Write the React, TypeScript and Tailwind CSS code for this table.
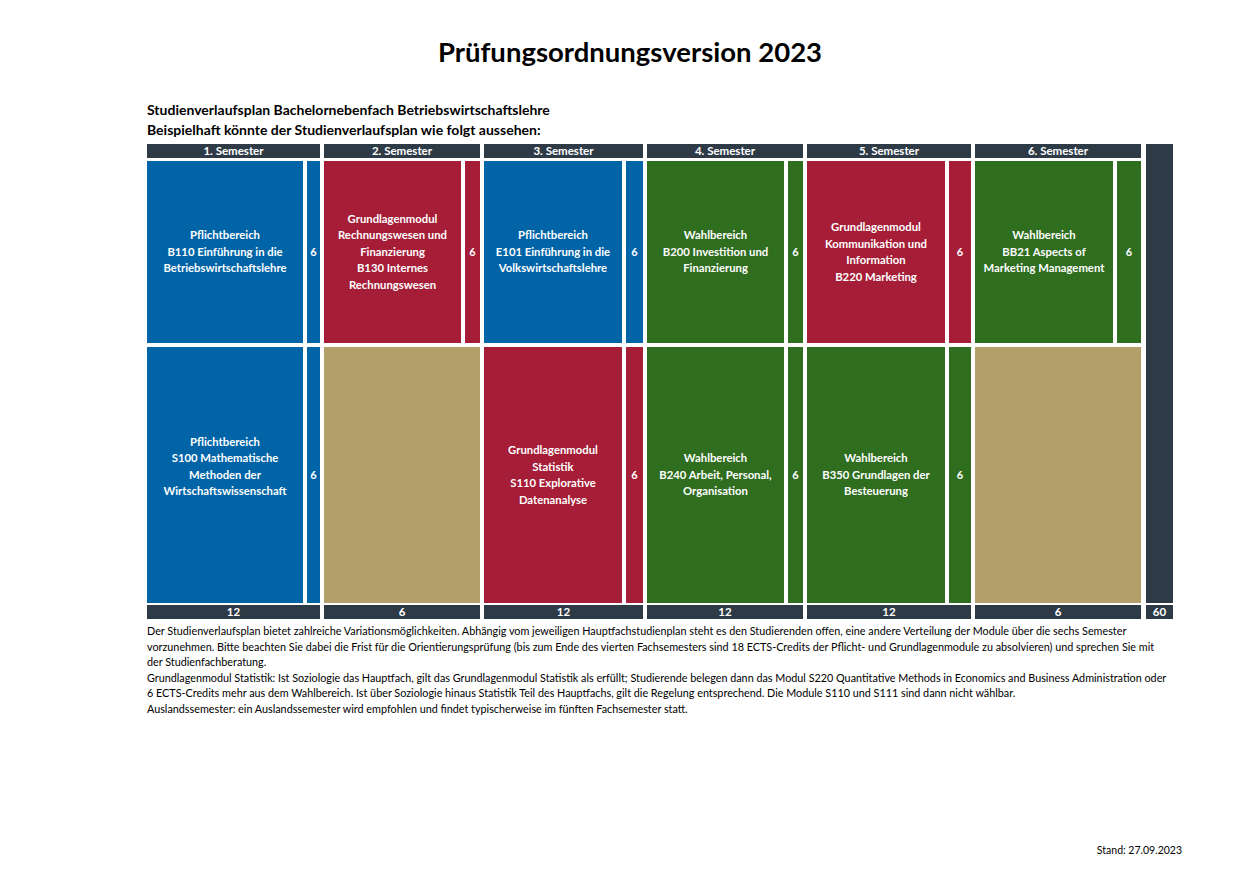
import React from 'react';

type Cell = { lines: string[]; ects?: string; color: string } | null;

const BLUE = 'bg-[#0064a7]';
const RED = 'bg-[#a51d37]';
const GREEN = 'bg-[#2f6d1f]';

const semesters: {
  label: string;
  nameW: string;
  ectsW: string;
  top: Cell;
  bottom: Cell;
  total: string;
}[] = [
  {
    label: '1. Semester',
    nameW: 'w-[156px]',
    ectsW: 'w-[13px]',
    top: { lines: ['Pflichtbereich', 'B110 Einführung in die', 'Betriebswirtschaftslehre'], ects: '6', color: BLUE },
    bottom: { lines: ['Pflichtbereich', 'S100 Mathematische', 'Methoden der', 'Wirtschaftswissenschaft', '\u00a0'], ects: '6', color: BLUE },
    total: '12',
  },
  {
    label: '2. Semester',
    nameW: 'w-[137px]',
    ectsW: 'w-[15px]',
    top: {
      lines: ['Grundlagenmodul', 'Rechnungswesen und', 'Finanzierung', 'B130 Internes', 'Rechnungswesen'],
      ects: '6',
      color: RED,
    },
    bottom: null,
    total: '6',
  },
  {
    label: '3. Semester',
    nameW: 'w-[138px]',
    ectsW: 'w-[17px]',
    top: { lines: ['Pflichtbereich', 'E101 Einführung in die', 'Volkswirtschaftslehre'], ects: '6', color: BLUE },
    bottom: { lines: ['Grundlagenmodul', 'Statistik', 'S110 Explorative', 'Datenanalyse'], ects: '6', color: RED },
    total: '12',
  },
  {
    label: '4. Semester',
    nameW: 'w-[137px]',
    ectsW: 'w-[15px]',
    top: { lines: ['Wahlbereich', 'B200 Investition und', 'Finanzierung'], ects: '6', color: GREEN },
    bottom: { lines: ['Wahlbereich', 'B240 Arbeit, Personal,', 'Organisation'], ects: '6', color: GREEN },
    total: '12',
  },
  {
    label: '5. Semester',
    nameW: 'w-[138px]',
    ectsW: 'w-[22px]',
    top: {
      lines: ['Grundlagenmodul', 'Kommunikation und', 'Information', 'B220 Marketing'],
      ects: '6',
      color: RED,
    },
    bottom: { lines: ['Wahlbereich', 'B350 Grundlagen der', 'Besteuerung'], ects: '6', color: GREEN },
    total: '12',
  },
  {
    label: '6. Semester',
    nameW: 'w-[138px]',
    ectsW: 'w-[24px]',
    top: { lines: ['Wahlbereich', 'BB21 Aspects of', 'Marketing Management'], ects: '6', color: GREEN },
    bottom: null,
    total: '6',
  },
];

const notes = [
  'Der Studienverlaufsplan bietet zahlreiche Variationsmöglichkeiten. Abhängig vom jeweiligen Hauptfachstudienplan steht es den Studierenden offen, eine andere Verteilung der Module über die sechs Semester',
  'vorzunehmen. Bitte beachten Sie dabei die Frist für die Orientierungsprüfung (bis zum Ende des vierten Fachsemesters sind 18 ECTS-Credits der Pflicht- und Grundlagenmodule zu absolvieren) und sprechen Sie mit',
  'der Studienfachberatung.',
  'Grundlagenmodul Statistik: Ist Soziologie das Hauptfach, gilt das Grundlagenmodul Statistik als erfüllt; Studierende belegen dann das Modul S220 Quantitative Methods in Economics and Business Administration oder',
  '6 ECTS-Credits mehr aus dem Wahlbereich. Ist über Soziologie hinaus Statistik Teil des Hauptfachs, gilt die Regelung entsprechend. Die Module S110 und S111 sind dann nicht wählbar.',
  'Auslandssemester: ein Auslandssemester wird empfohlen und findet typischerweise im fünften Fachsemester statt.',
];

function ModuleRow({ cell, nameW, ectsW, height }: { cell: Cell; nameW: string; ectsW: string; height: string }) {
  if (!cell) {
    return <div className={`${height} w-full bg-[#b39f69]`} />;
  }
  return (
    <div className={`${height} flex gap-[4px]`}>
      <div
        className={`${nameW} ${cell.color} flex flex-col items-center justify-center text-center text-white text-[11.3px] font-bold leading-[16.5px]`}
      >
        {cell.lines.map((line, i) => (
          <div key={i} className="whitespace-nowrap">
            {line}
          </div>
        ))}
      </div>
      <div className={`${ectsW} ${cell.color} flex items-center justify-center text-white text-[11px] font-bold`}>
        {cell.ects}
      </div>
    </div>
  );
}

export default function App() {
  return (
    <div className="w-[1260px] h-[891px] bg-white text-black font-['Lato','Open_Sans',sans-serif] flex flex-col">
      <h1 className="mt-[35px] text-center text-[27.5px] font-bold leading-[34px]">Prüfungsordnungsversion 2023</h1>

      <div className="ml-[147px] mt-[31px] text-[14px] font-bold leading-[20px]">
        <p>Studienverlaufsplan Bachelornebenfach Betriebswirtschaftslehre</p>
        <p>Beispielhaft könnte der Studienverlaufsplan wie folgt aussehen:</p>
      </div>

      <div className="ml-[147px] mt-[4px] flex gap-[4px]">
        {semesters.map((s) => (
          <div key={s.label} className="flex flex-col">
            <div className="h-[14px] bg-[#2e3b47] text-white text-[11.5px] font-bold leading-[14px] text-center">
              {s.label}
            </div>
            <div className="mt-[3px]">
              <ModuleRow cell={s.top} nameW={s.nameW} ectsW={s.ectsW} height="h-[182px]" />
            </div>
            <div className="mt-[4px]">
              <ModuleRow cell={s.bottom} nameW={s.nameW} ectsW={s.ectsW} height="h-[256px]" />
            </div>
            <div className="mt-[2px] h-[14px] bg-[#2e3b47] text-white text-[11.5px] font-bold leading-[14px] text-center">
              {s.total}
            </div>
          </div>
        ))}
        <div className="ml-[1px] w-[27px] flex flex-col">
          <div className="h-[459px] bg-[#2e3b47]" />
          <div className="mt-[2px] h-[14px] bg-[#2e3b47] text-white text-[11.5px] font-bold leading-[14px] text-center">
            60
          </div>
        </div>
      </div>

      <div className="ml-[147px] mt-[4px] text-[10.8px] leading-[15.5px]">
        {notes.map((n, i) => (
          <p key={i} className="whitespace-nowrap">
            {n}
          </p>
        ))}
      </div>

      <div className="mt-auto mb-[34px] pr-[78px] flex justify-end text-[10.5px] leading-[14px]">Stand: 27.09.2023</div>
    </div>
  );
}
